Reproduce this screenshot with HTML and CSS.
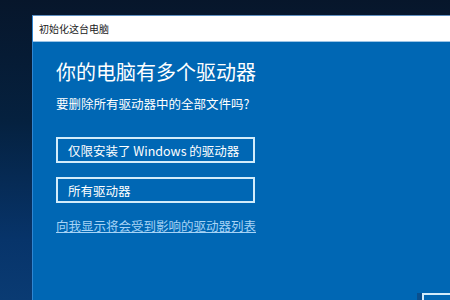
FILE: index.html
```html
<!DOCTYPE html>
<html lang="zh-CN">
<head>
    <meta charset="UTF-8">
    <meta name="viewport" content="width=device-width, initial-scale=1.0">
    <title>初始化这台电脑</title>
    <link rel="stylesheet" href="styles.css">
</head>
<body>
    <div class="dialog">
        <div class="titlebar">初始化这台电脑</div>
        <div class="content">
            <h1>你的电脑有多个驱动器</h1>
            <p class="question">要删除所有驱动器中的全部文件吗?</p>
            <button class="choice">仅限安装了 Windows 的驱动器</button>
            <button class="choice">所有驱动器</button>
            <a class="link" href="#">向我显示将会受到影响的驱动器列表</a>
            <div class="footer">
                <button class="cancel" aria-label="取消"></button>
            </div>
        </div>
    </div>
</body>
</html>
```

FILE: styles.css
```css
html, body {
    height: 100%;
}
body {
    margin: 0;
    overflow: hidden;
    padding: 15px 0 0 32px;
    box-sizing: border-box;
    font-family: "Noto Sans CJK SC", "Noto Sans", sans-serif;
    background:
        linear-gradient(172deg, transparent 84%, rgba(70, 140, 215, 0.35) 87%, transparent 90%),
        linear-gradient(180deg, #07162b 0%, #05213f 40%, #07346a 80%, #0a3b73 100%);
}
.dialog {
    width: 440px;
    height: 300px;
    background-color: #0067b4;
    border-left: 1px solid #2f86d2;
    border-top: 1px solid #5f8fc0;
}
.titlebar {
    height: 25px;
    line-height: 25px;
    padding-left: 6px;
    background-color: #ffffff;
    color: #222;
    font-size: 10px;
    border-bottom: 1px solid #9cc4e6;
}
.content {
    padding: 18px 0 0 23px;
    display: flex;
    flex-direction: column;
    align-items: flex-start;
}
h1 {
    margin: 0;
    font-size: 20px;
    line-height: 24px;
    font-weight: 400;
    color: #ffffff;
}
.question {
    margin: 12px 0 0;
    font-size: 12.5px;
    line-height: 16px;
    color: #ffffff;
}
.choice {
    width: 199px;
    height: 26px;
    margin-top: 25px;
    padding: 0 0 0 10px;
    text-align: left;
    font-family: inherit;
    font-size: 12.5px;
    color: #ffffff;
    background-color: transparent;
    border: 2px solid #d2ecfb;
    box-sizing: border-box;
}
.choice + .choice {
    margin-top: 14px;
}
.link {
    margin-top: 15px;
    font-size: 12.5px;
    line-height: 16px;
    color: #a6d3f6;
    text-decoration: underline;
}
.footer {
    margin-top: 59px;
    padding-left: 366px;
}
.cancel {
    width: 80px;
    height: 26px;
    border: 2px solid #d2ecfb;
    background-color: transparent;
    box-shadow: -6px -1px 0 -1px #0a4f8e;
}
```
